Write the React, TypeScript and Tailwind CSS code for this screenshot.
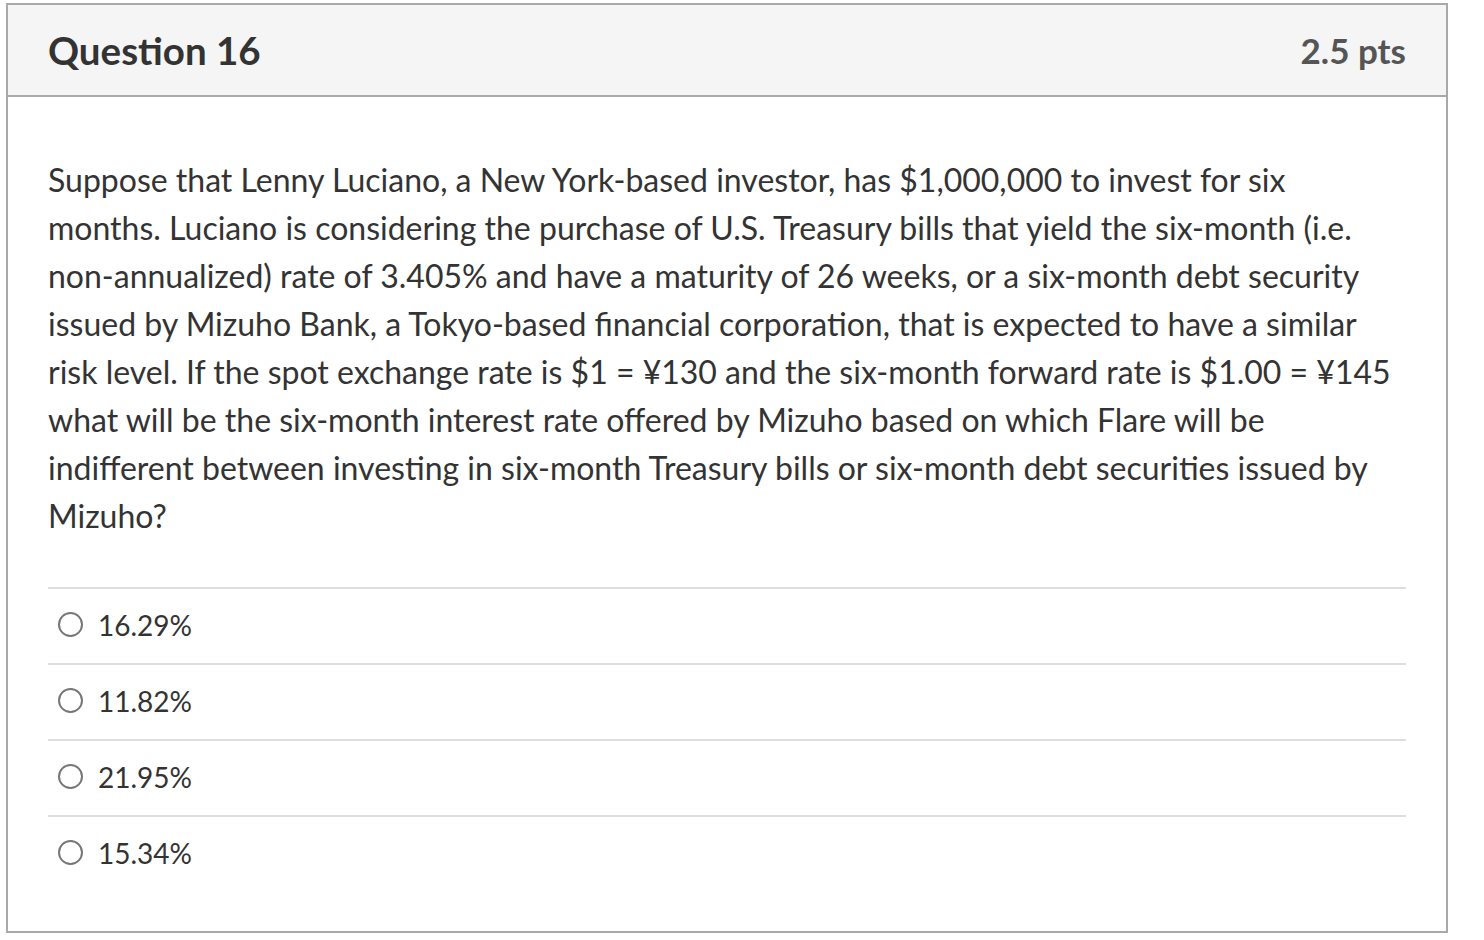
export default function App() {
  const answers = ["16.29%", "11.82%", "21.95%", "15.34%"];

  return (
    <div className="min-h-[940px] bg-white pl-[6px] pt-[3px] font-['Lato','Noto_Sans',sans-serif] text-[#333]">
      <div className="w-[1442px] h-[930px] border-2 border-[#a9a9a9] flex flex-col">
        {/* Header */}
        <div className="h-[92px] bg-[#f5f5f5] border-b-2 border-[#a9a9a9] flex items-center justify-between pl-[40px] pr-[40px]">
          <h2 className="text-[38.5px] font-bold text-[#333] leading-none">Question 16</h2>
          <span className="text-[35px] font-bold text-[#555] leading-none">2.5 pts</span>
        </div>

        {/* Body */}
        <div className="px-[40px] pt-[59px]">
          <p className="text-[32px] leading-[48px] whitespace-nowrap">
            Suppose that Lenny Luciano, a New York-based investor, has $1,000,000 to invest for six
            <br />
            months. Luciano is considering the purchase of U.S. Treasury bills that yield the six-month (i.e.
            <br />
            non-annualized) rate of 3.405% and have a maturity of 26 weeks, or a six-month debt security
            <br />
            issued by Mizuho Bank, a Tokyo-based financial corporation, that is expected to have a similar
            <br />
            risk level. If the spot exchange rate is $1 = ¥130 and the six-month forward rate is $1.00 = ¥145
            <br />
            what will be the six-month interest rate offered by Mizuho based on which Flare will be
            <br />
            indifferent between investing in six-month Treasury bills or six-month debt securities issued by
            <br />
            Mizuho?
          </p>

          <div className="mt-[47px]">
            {answers.map((a) => (
              <label
                key={a}
                className="h-[76px] border-t-2 border-[#dedede] flex items-center gap-[15px] pl-[10px] pb-[3px]"
              >
                <span className="w-[25px] h-[25px] rounded-full border-2 border-[#777] bg-white shrink-0" />
                <span className="text-[28px] leading-none">{a}</span>
              </label>
            ))}
          </div>
        </div>
      </div>
    </div>
  );
}
